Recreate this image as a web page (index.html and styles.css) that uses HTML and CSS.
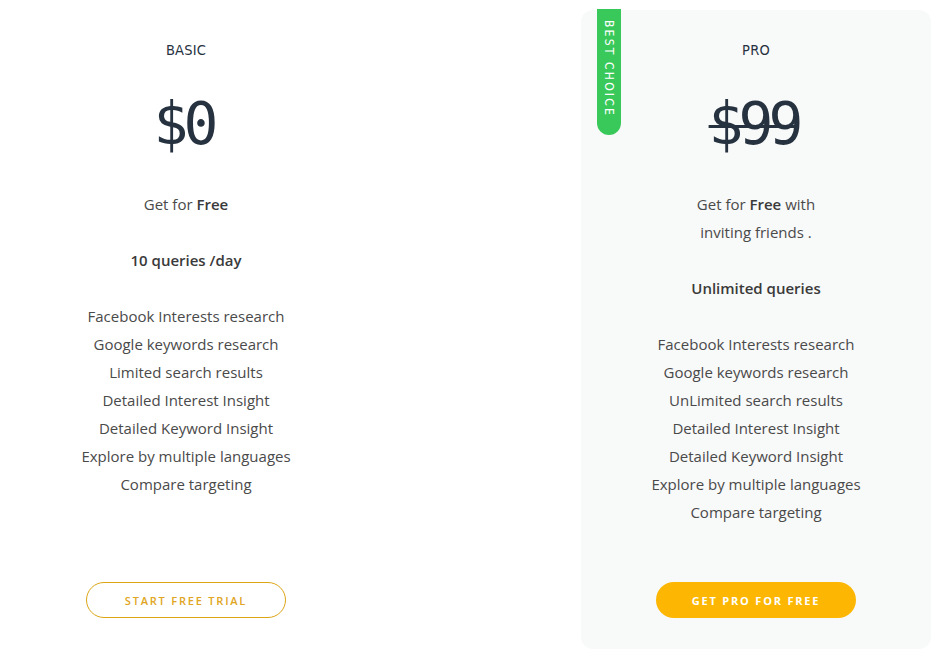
FILE: index.html
```html
<!DOCTYPE html>
<html lang="en">
<head>
<meta charset="utf-8">
<title>Pricing</title>
<link rel="stylesheet" href="styles.css">
</head>
<body>
<div class="plans">
  <section class="plan">
    <h2 class="plan-name">BASIC</h2>
    <div class="price">$0</div>
    <p class="lead">Get for <strong>Free</strong></p>
    <p class="quota">10 queries /day</p>
    <ul class="features">
      <li>Facebook Interests research</li>
      <li>Google keywords research</li>
      <li>Limited search results</li>
      <li>Detailed Interest Insight</li>
      <li>Detailed Keyword Insight</li>
      <li>Explore by multiple languages</li>
      <li>Compare targeting</li>
    </ul>
    <a class="btn btn-outline" href="#">START FREE TRIAL</a>
  </section>
  <section class="plan plan-pro">
    <span class="badge">BEST CHOICE</span>
    <h2 class="plan-name">PRO</h2>
    <div class="price price-old">$99</div>
    <p class="lead"><span class="line">Get for <strong>Free</strong> with</span><span class="line">inviting friends .</span></p>
    <p class="quota">Unlimited queries</p>
    <ul class="features">
      <li>Facebook Interests research</li>
      <li>Google keywords research</li>
      <li>UnLimited search results</li>
      <li>Detailed Interest Insight</li>
      <li>Detailed Keyword Insight</li>
      <li>Explore by multiple languages</li>
      <li>Compare targeting</li>
    </ul>
    <a class="btn btn-solid" href="#">GET PRO FOR FREE</a>
  </section>
</div>
</body>
</html>
```
FILE: styles.css
```css
* { box-sizing: border-box; }
html, body { margin: 0; padding: 0; background: #fff; }
body {
  font-family: "Open Sans", "Liberation Sans", sans-serif;
  color: #4a4a4a;
  width: 943px;
  height: 665px;
  overflow: hidden;
}
.plans {
  display: flex;
  justify-content: space-between;
  padding: 10px 12px 0 11px;
}
.plan {
  position: relative;
  width: 350px;
  height: 639px;
  display: flex;
  flex-direction: column;
  align-items: center;
  text-align: center;
  padding-top: 31px;
  padding-bottom: 31px;
  border-radius: 12px;
}
.plan-pro { background: #f8f9f9; }
.plan-name {
  margin: 0;
  font-family: "DejaVu Sans Condensed", "DejaVu Sans", sans-serif;
  font-weight: normal;
  font-size: 14.5px;
  line-height: 18px;
  color: #26323f;
  letter-spacing: 0.2px;
}
.price {
  margin-top: 33px;
  font-family: "DejaVu Sans Mono", monospace;
  font-size: 58px;
  line-height: 64px;
  letter-spacing: -5px;
  color: #26323f;
  padding-right: 5px;
}
.price-old { text-decoration: line-through; text-decoration-thickness: 3px; }
.lead {
  margin: 34px 0 0;
  font-size: 15px;
  line-height: 28px;
}
.lead .line { display: block; }
.lead strong { font-weight: 600; color: #3a3a3a; }
.quota {
  margin: 28px 0 0;
  font-size: 15px;
  line-height: 28px;
  font-weight: 600;
  color: #3a3a3a;
}
.features {
  list-style: none;
  margin: 28px 0 0;
  padding: 0;
  font-size: 15px;
  line-height: 28px;
}
.btn {
  margin-top: auto;
  width: 200px;
  height: 36px;
  border-radius: 18px;
  display: flex;
  align-items: center;
  justify-content: center;
  font-size: 11px;
  font-weight: 700;
  letter-spacing: 1.8px;
  text-decoration: none;
}
.btn-outline {
  border: 1px solid #dca516;
  color: #e0a522;
  font-weight: 600;
}
.btn-solid {
  background: #fdb702;
  color: #fff;
}
.badge {
  position: absolute;
  top: -1px;
  left: 16px;
  width: 24px;
  height: 126px;
  background: #39c95a;
  border-radius: 0 0 12px 12px;
  color: #fff;
  font-family: "DejaVu Sans Condensed", "DejaVu Sans", sans-serif;
  font-size: 12px;
  letter-spacing: 2.2px;
  writing-mode: vertical-rl;
  display: flex;
  align-items: center;
  padding-top: 11px;
}
```
